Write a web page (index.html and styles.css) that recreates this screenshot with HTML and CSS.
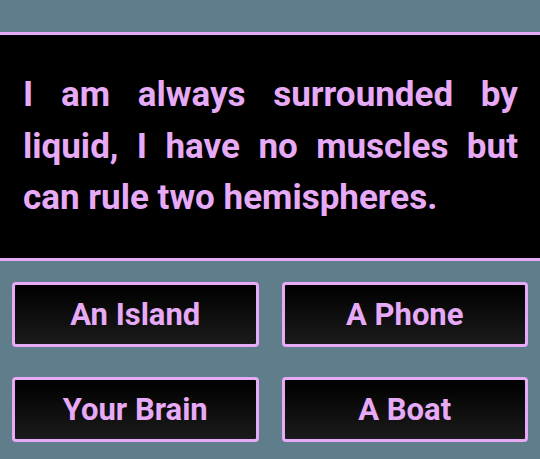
FILE: index.html
```html
<!DOCTYPE html>
<html>
<head>
<meta charset="utf-8">
<link rel="stylesheet" href="styles.css">
</head>
<body>
<div class="top"></div>
<div class="question">
  <p class="question-text">I am always surrounded by liquid, I have no muscles but can rule two hemispheres.</p>
</div>
<div class="answers">
  <button class="answer">An Island</button>
  <button class="answer">A Phone</button>
  <button class="answer">Your Brain</button>
  <button class="answer">A Boat</button>
</div>
</body>
</html>
```
FILE: styles.css
```css
html, body {
  margin: 0;
  padding: 0;
}
body {
  background: #607d8b;
  font-family: Roboto, "Liberation Sans", sans-serif;
  width: 540px;
  height: 459px;
  overflow: hidden;
}
.top {
  height: 32px;
}
.question {
  background: #000;
  border-top: 3px solid #e6aaf7;
  border-bottom: 3px solid #e6aaf7;
  height: 223px;
  box-sizing: content-box;
  padding: 0 22px 0 23px;
  display: flex;
  align-items: center;
}
.question-text {
  margin: 0;
  color: #e6aaf7;
  font-weight: 700;
  font-size: 35px;
  line-height: 51.5px;
  text-align: justify;
  width: 100%;
}
.answers {
  display: grid;
  grid-template-columns: 1fr 1fr;
  column-gap: 23px;
  row-gap: 30px;
  padding: 21px 12px 0;
}
.answer {
  height: 65px;
  border: 3px solid #e6aaf7;
  border-radius: 4px;
  background: linear-gradient(to bottom, #000 0%, #1b1b1b 100%);
  color: #e6aaf7;
  font-family: Roboto, "Liberation Sans", sans-serif;
  font-weight: 700;
  font-size: 31px;
  padding: 0;
  margin: 0;
}
```
